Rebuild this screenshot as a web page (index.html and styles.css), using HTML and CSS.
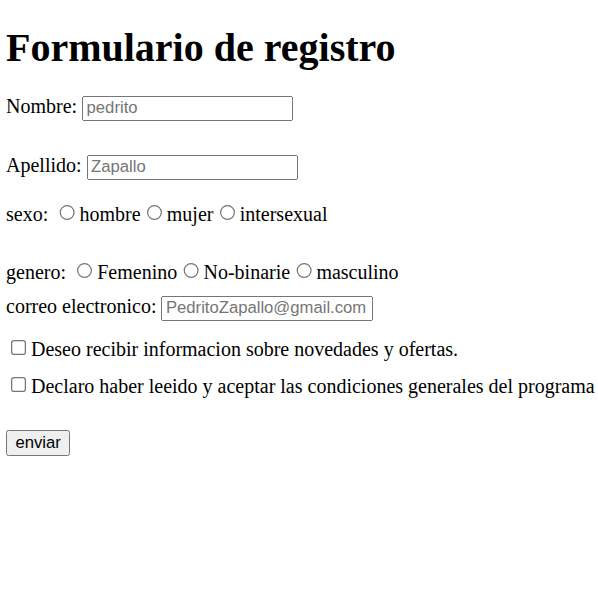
FILE: index.html
```html
<!DOCTYPE html>
<html lang="es">
<head>
<meta charset="utf-8">
<title>Formulario de registro</title>
<link rel="stylesheet" href="styles.css">
</head>
<body>
<div class="page">
  <h1 class="title">Formulario de registro</h1>
  <form class="form">
    <div class="row row-nombre"><label for="n">Nombre:</label> <input class="field" id="n" type="text" placeholder="pedrito"></div>
    <div class="row row-apellido"><label for="a">Apellido:</label> <input class="field" id="a" type="text" placeholder="Zapallo"></div>
    <div class="row row-sexo">sexo: <input type="radio" name="sexo" id="s1"><label for="s1">hombre</label><input type="radio" name="sexo" id="s2"><label for="s2">mujer</label><input type="radio" name="sexo" id="s3"><label for="s3">intersexual</label></div>
    <div class="row row-genero">genero: <input type="radio" name="genero" id="g1"><label for="g1">Femenino</label><input type="radio" name="genero" id="g2"><label for="g2">No-binarie</label><input type="radio" name="genero" id="g3"><label for="g3">masculino</label></div>
    <div class="row row-correo"><label for="c">correo electronico:</label> <input class="field" id="c" type="email" placeholder="PedritoZapallo@gmail.com"></div>
    <div class="row row-check1"><input type="checkbox" id="k1"><label for="k1">Deseo recibir informacion sobre novedades y ofertas.</label></div>
    <div class="row row-check2"><input type="checkbox" id="k2"><label for="k2">Declaro haber leeido y aceptar las condiciones generales del programa</label></div>
    <div class="row row-enviar"><button type="submit" class="btn">enviar</button></div>
  </form>
</div>
</body>
</html>
```

FILE: styles.css
```css
html, body {
  margin: 0;
  padding: 0;
  background: #fff;
}
.page {
  zoom: 1.25;
  padding: 0 0 0 4.8px;
  font-family: "Liberation Serif", "Times New Roman", serif;
  font-size: 16px;
  color: #000;
}
.title {
  font-size: 32px;
  font-weight: bold;
  margin: 19px 0 0 0;
}
.form {
  margin: 0;
}
.row {
  margin: 0;
  white-space: nowrap;
}
.row-nombre { margin-top: 19.6px; }
.row-apellido { margin-top: 26.8px; }
.row-sexo { margin-top: 16.8px; }
.row-genero { margin-top: 26.4px; }
.row-correo { margin-top: 9.2px; }
.row-check1 { margin-top: 12px; }
.row-check2 { margin-top: 10px; }
.row-enviar { margin-top: 25px; }
.field {
  box-sizing: border-box;
  width: 169px;
  height: 20px;
  font-family: Arial, "Liberation Sans", sans-serif;
  font-size: 13.333px;
}
.btn {
  box-sizing: border-box;
  height: 21px;
  font-family: Arial, "Liberation Sans", sans-serif;
  font-size: 13.333px;
}
```
